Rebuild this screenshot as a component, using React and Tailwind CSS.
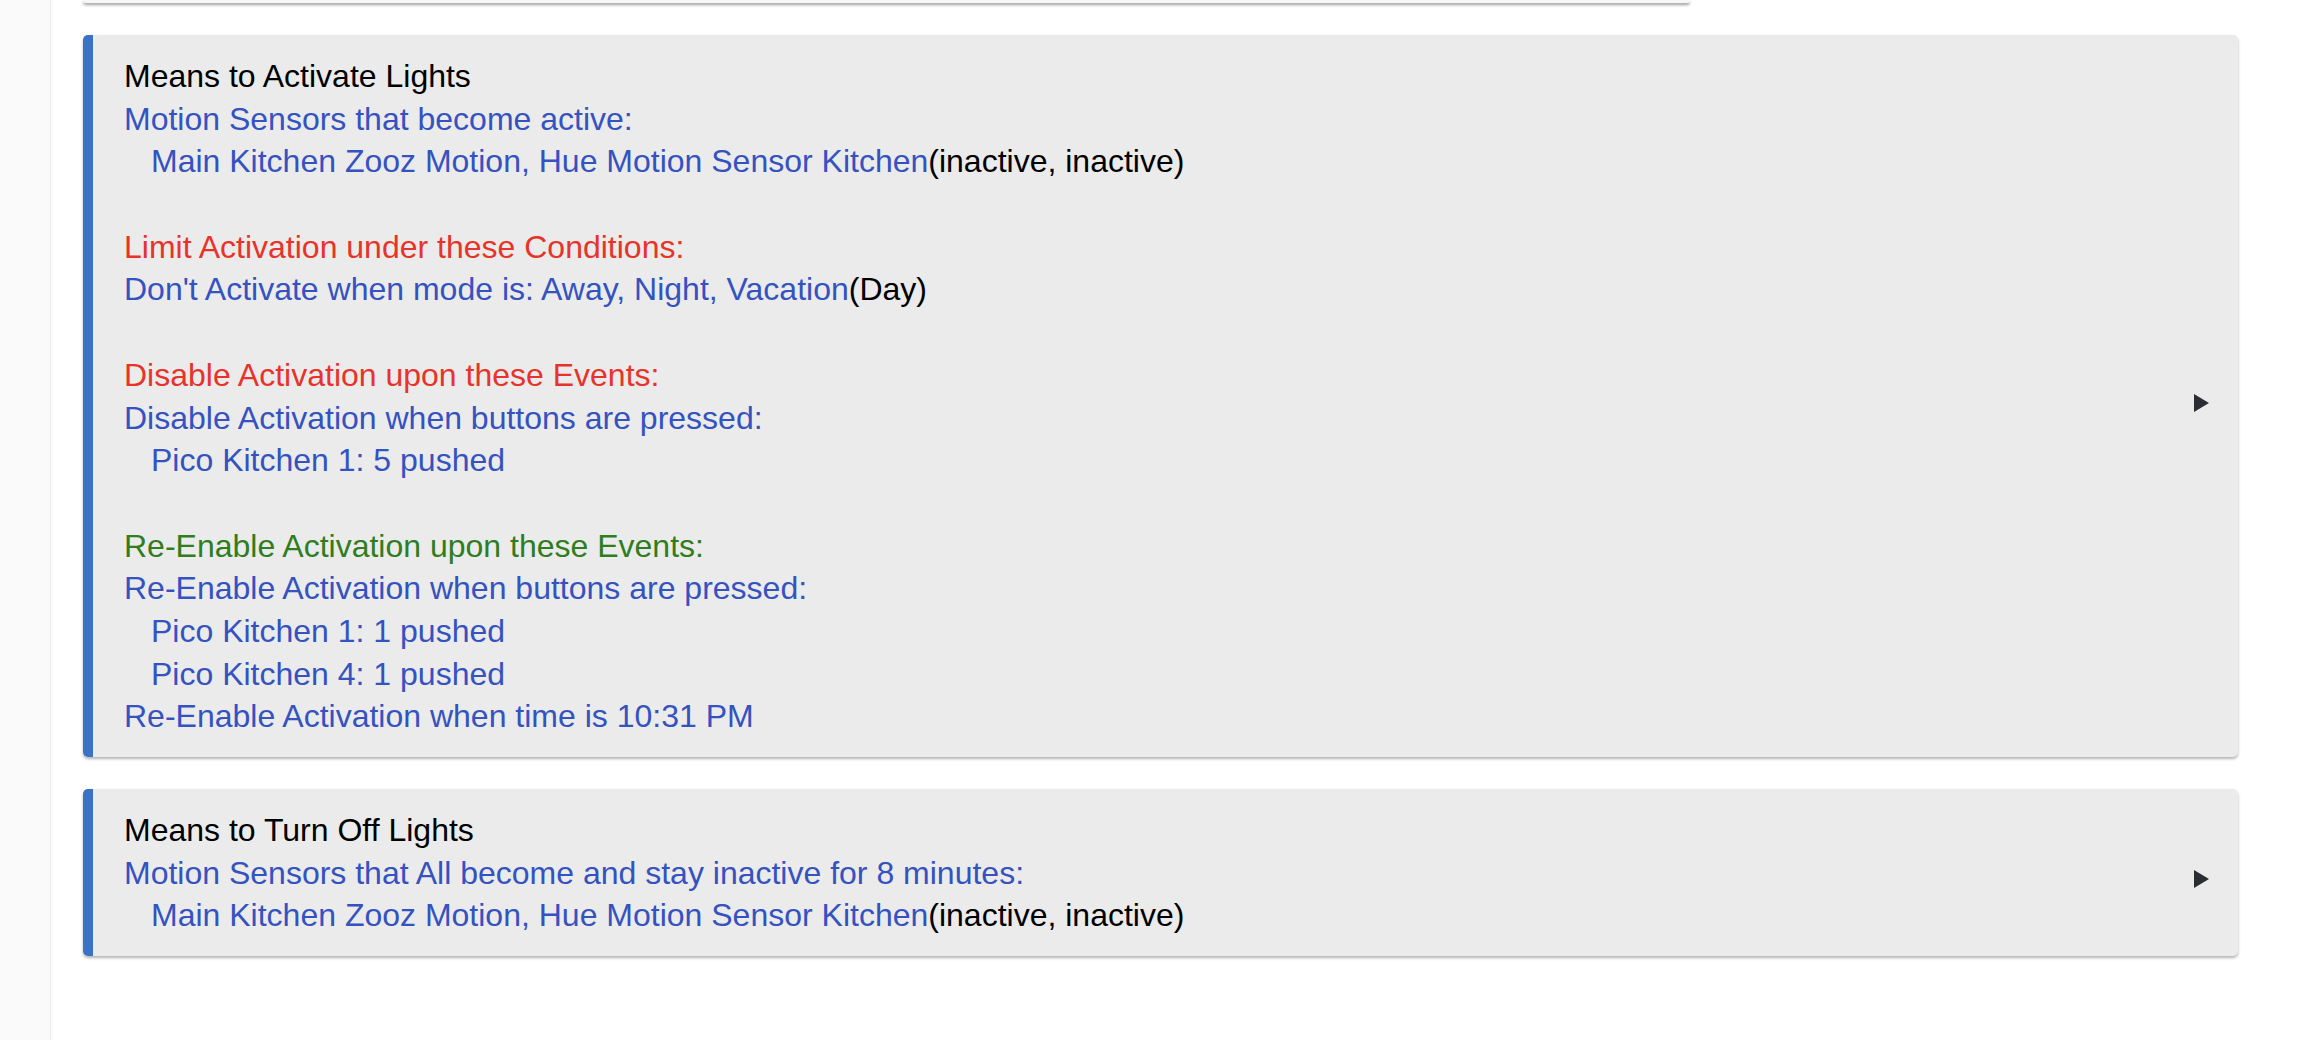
import React from "react";

const BLUE = "text-[#3552c1]";

const activateLines = [
  { text: "Means to Activate Lights", color: "text-black" },
  { text: "Motion Sensors that become active:", color: BLUE },
  { text: "Main Kitchen Zooz Motion, Hue Motion Sensor Kitchen", color: BLUE, indent: true, state: "(inactive, inactive)" },
  { blank: true },
  { text: "Limit Activation under these Conditions:", color: "text-[#e8332a]" },
  { text: "Don't Activate when mode is: Away, Night, Vacation", color: BLUE, state: "(Day)" },
  { blank: true },
  { text: "Disable Activation upon these Events:", color: "text-[#e8332a]" },
  { text: "Disable Activation when buttons are pressed:", color: BLUE },
  { text: "Pico Kitchen 1: 5 pushed", color: BLUE, indent: true },
  { blank: true },
  { text: "Re-Enable Activation upon these Events:", color: "text-[#2f7d1e]" },
  { text: "Re-Enable Activation when buttons are pressed:", color: BLUE },
  { text: "Pico Kitchen 1: 1 pushed", color: BLUE, indent: true },
  { text: "Pico Kitchen 4: 1 pushed", color: BLUE, indent: true },
  { text: "Re-Enable Activation when time is 10:31 PM", color: BLUE },
];

const offLines = [
  { text: "Means to Turn Off Lights", color: "text-black" },
  { text: "Motion Sensors that All become and stay inactive for 8 minutes:", color: BLUE },
  { text: "Main Kitchen Zooz Motion, Hue Motion Sensor Kitchen", color: BLUE, indent: true, state: "(inactive, inactive)" },
];

function Line({ line }) {
  if (line.blank) return <div className="h-[42.7px]" />;
  return (
    <div className={`h-[42.7px] whitespace-nowrap ${line.indent ? "pl-[27px]" : ""}`}>
      <span className={line.color}>{line.text}</span>
      {line.state && <span className="text-black">{line.state}</span>}
    </div>
  );
}

function RuleCard({ lines }) {
  return (
    <div className="flex rounded-[5px] bg-[#ebebeb] shadow-[0_2px_3px_rgba(0,0,0,0.3)] overflow-hidden">
      <div className="w-[10px] shrink-0 bg-[#3a73c4]" />
      <div className="flex flex-1 items-center justify-between pl-[31px] pr-[29px] pt-[20px] pb-[19px]">
        <div className="text-[32px] leading-[42.7px]">
          {lines.map((line, i) => (
            <Line key={i} line={line} />
          ))}
        </div>
        <svg width="15" height="18" viewBox="0 0 15 18" className="mt-[12px] shrink-0">
          <path d="M0 0 L15 9 L0 18 Z" fill="#2b2d33" />
        </svg>
      </div>
    </div>
  );
}

export default function App() {
  return (
    <div className="flex min-h-screen bg-white font-['Liberation_Sans',Arial,sans-serif]">
      {/* Sidebar strip */}
      <div className="w-[51px] shrink-0 bg-[#fafafa] border-r border-[#ececec] shadow-[1px_0_3px_rgba(0,0,0,0.04)]" />

      <main className="flex-1 pl-[32px] pr-[62px]">
        {/* Bottom edge of the card above */}
        <div className="h-[3px] w-[1607px] rounded-b-[3px] bg-[#f7f7f7] shadow-[0_2px_3px_rgba(0,0,0,0.4)]" />

        <div className="mt-[32px] flex flex-col gap-[32px]">
          <RuleCard lines={activateLines} />
          <RuleCard lines={offLines} />
        </div>
      </main>
    </div>
  );
}
